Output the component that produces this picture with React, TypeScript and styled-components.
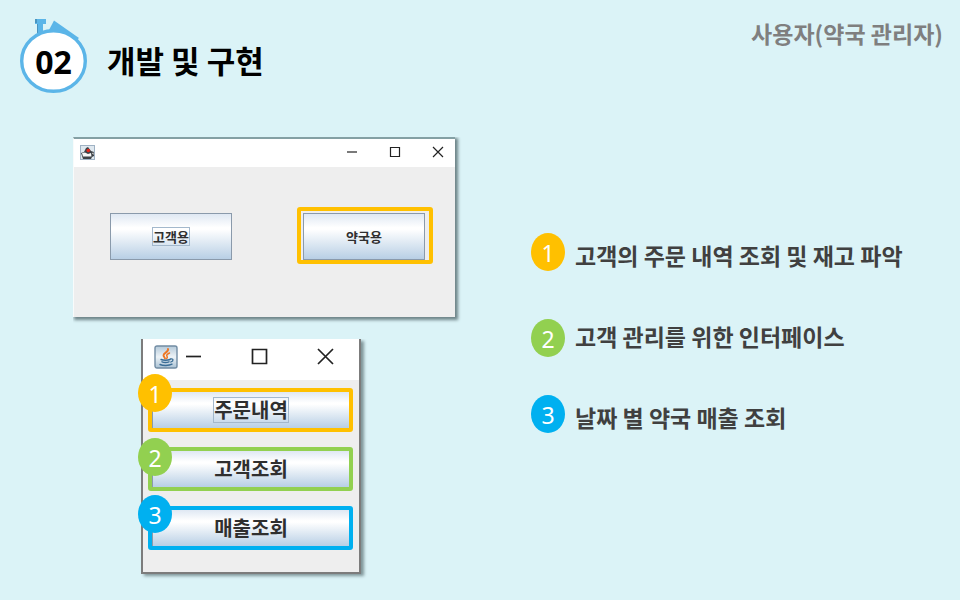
import React from "react";
import styled, { createGlobalStyle } from "styled-components";

const GlobalStyle = createGlobalStyle`
  *, *::before, *::after { box-sizing: border-box; }
  body {
    margin: 0;
    background: #dbf3f7;
    font-family: "Noto Sans CJK KR", "Noto Sans", sans-serif;
  }
`;

const YELLOW = "#ffc000";
const GREEN = "#92d050";
const BLUE = "#00b0f0";

const Page = styled.div`
  min-height: 100vh;
`;

const Header = styled.header`
  display: flex;
  align-items: flex-start;
  padding: 18px 17px 0 20px;
`;

const Emblem = styled.div`
  position: relative;
  width: 67px;
  height: 76px;
  flex: none;
  svg { display: block; }
`;

const EmblemNumber = styled.span`
  position: absolute;
  inset: 12px 0 0 0;
  display: flex;
  align-items: center;
  justify-content: center;
  font: 700 32px/40px "Noto Sans", sans-serif;
  color: #000;
`;

const Title = styled.h1`
  margin: 20px 0 0 20px;
  font-size: 31px;
  line-height: 44px;
  font-weight: 700;
  color: #000;
`;

const Role = styled.p`
  margin: 0 0 0 auto;
  font-size: 23px;
  line-height: 30px;
  font-weight: 700;
  color: #7f7f7f;
`;

const Main = styled.main`
  display: grid;
  grid-template-columns: 458fr 429fr;
  padding: 43px 0 24px 73px;
`;

const Shots = styled.div`
  display: flex;
  flex-direction: column;
  gap: 22px;
`;

const LauncherWindow = styled.section`
  width: 100%;
  max-width: 382px;
  border-top: 2px solid #84a0a4;
  border-left: 1px solid #f8fbfb;
  background: #eeeeee;
  box-shadow: 2px 2px 3px 1px #6f8589;
  clip-path: inset(0 -8px -8px 0);
`;

const MenuWindow = styled.section`
  width: 100%;
  max-width: 220px;
  margin-left: 68px;
  border: 2px solid #7c7c7c;
  border-top: 0;
  background: #eeeeee;
  box-shadow: 3px 2px 3px 0 #7f9599;
  clip-path: inset(0 -8px -8px -8px);
`;

const TitleBar = styled.div<{ $large?: boolean }>`
  display: flex;
  align-items: center;
  height: ${(p) => (p.$large ? 41 : 28)}px;
  padding: ${(p) => (p.$large ? "0 25px 6px 11px" : "0 11px 2px 6px")};
  background: #fff;
  svg { display: block; }
`;

const Controls = styled.div<{ $large?: boolean }>`
  display: flex;
  flex: ${(p) => (p.$large ? 1 : "none")};
  justify-content: space-between;
  gap: ${(p) => (p.$large ? 0 : 31)}px;
  margin-left: ${(p) => (p.$large ? "7px" : "auto")};
`;

const ControlButton = styled.button`
  display: block;
  padding: 0;
  border: 0;
  background: none;
`;

const LauncherBody = styled.div`
  display: flex;
  justify-content: space-between;
  padding: 40px 22px 53px 30px;
`;

const MenuBody = styled.div`
  display: flex;
  flex-direction: column;
  gap: 15px;
  padding: 8px 6px 22px 5px;
`;

const Frame = styled.div<{ $color: string; $menu?: boolean }>`
  position: relative;
  display: flex;
  width: ${(p) => (p.$menu ? "auto" : "136px")};
  height: ${(p) => (p.$menu ? 44 : 57)}px;
  padding: ${(p) => (p.$menu ? 0 : "2px 4px 0 2px")};
  border: 4px solid ${(p) => p.$color};
  border-radius: 3px;
`;

const SwingButton = styled.button<{ $menu?: boolean }>`
  flex: 1;
  display: flex;
  align-items: center;
  justify-content: center;
  padding: 0;
  border: 1px solid #8a9aab;
  border-width: ${(p) => (p.$menu ? "0 0 0 1px" : "1px")};
  background: linear-gradient(#dfe8f3 0%, #ffffff 30%, #ffffff 34%, #b8cfe5 100%);
  font-family: inherit;
  font-weight: 700;
  font-size: ${(p) => (p.$menu ? 20 : 13)}px;
  line-height: ${(p) => (p.$menu ? 24 : 17)}px;
  color: #2f2f2f;
`;

const ButtonLabel = styled.span<{ $focused?: boolean }>`
  border: 1px solid ${(p) => (p.$focused ? "#a3b8cc" : "transparent")};
`;

const Badge = styled.span<{ $color: string }>`
  display: flex;
  flex: none;
  align-items: center;
  justify-content: center;
  width: 34px;
  height: 38px;
  padding-top: 2px;
  border-radius: 50%;
  background: ${(p) => p.$color};
  font: 400 23px/32px "Noto Sans", sans-serif;
  color: #fff;
`;

const PinnedBadge = styled(Badge)<{ $top: number }>`
  position: absolute;
  left: -14px;
  top: ${(p) => p.$top}px;
`;

const Notes = styled.ol`
  display: flex;
  flex-direction: column;
  gap: 33px;
  margin: 96px 0 0;
  padding: 0;
  list-style: none;
`;

const Note = styled.li`
  display: flex;
  height: 48px;
  gap: 10px;
`;

const NoteBadge = styled(Badge)<{ $align: string }>`
  align-self: ${(p) => p.$align};
`;

const NoteText = styled.span`
  font-size: 23px;
  line-height: 44px;
  font-weight: 700;
  color: #404040;
  white-space: nowrap;
`;

function StopwatchArt() {
  return (
    <svg width="67" height="76" viewBox="0 0 67 76" aria-hidden="true">
      <path d="M15 1h11v5h-3v10h-6V6h-2z" fill="#5bb5e8" />
      <path d="M15 1h2v4h-2zM17 6h1v9h-1z" fill="#4a94bf" />
      <path d="M34 2.500L59 20L52 26L29 12z" fill="#5bb5e8" />
      <ellipse cx="33.500" cy="43" rx="31.800" ry="30.300" fill="#fff" stroke="#5bb5e8" strokeWidth="3.400" />
    </svg>
  );
}

function DukeIcon() {
  return (
    <svg width="15" height="15" viewBox="0 0 15 15" aria-hidden="true">
      <rect x=".5" y=".5" width="14" height="14" fill="#dfe8ef" stroke="#9fb2c4" />
      <path d="M1 8l3-1 2-4 2-1 3 4 3 1v4l-2 1-1 2H3l-1-3z" fill="#3d4247" />
      <path d="M2 8l3-.5 3 1.500 3-1 .5 3.500H3z" fill="#f4f6f7" />
      <path d="M12 8l1.500-.5v2.500z" fill="#fff" />
      <circle cx="8.300" cy="5.500" r="1.800" fill="#e8261c" />
    </svg>
  );
}

function JavaIcon() {
  return (
    <svg width="24" height="24" viewBox="0 0 24 24" aria-hidden="true">
      <defs>
        <linearGradient id="javaTile" x1="0" y1="0" x2="0" y2="1">
          <stop offset="0" stopColor="#b4c9d9" />
          <stop offset=".5" stopColor="#edf3f7" />
          <stop offset="1" stopColor="#a9c1d3" />
        </linearGradient>
      </defs>
      <rect x="1" y="1" width="22" height="22" rx="2" fill="url(#javaTile)" stroke="#718ca3" strokeWidth="1.400" />
      <g fill="none" strokeLinecap="round">
        <path d="M14 4c1 3-5 4-4.500 6.500C9.800 12 11 12.500 11 13.500" stroke="#ee7623" strokeWidth="1.900" />
        <path d="M15.500 8c-2 1-3.500 1.800-2.500 3.200.6.900.4 1.600-.3 2.300" stroke="#ee7623" strokeWidth="1.500" />
        <path d="M7 14.500c2 1 7 1 9 0M8 16.800c2 .8 5 .8 7 0M6 19.500c3 1.400 9 1.300 12-.3" stroke="#3b6d96" strokeWidth="1.400" />
        <path d="M16.500 14c3-.8 3.500 2 .3 3" stroke="#3b6d96" strokeWidth="1.300" />
      </g>
    </svg>
  );
}

function WindowControls({ large }: { large?: boolean }) {
  const s = large ? 17 : 12;
  const w = large ? 1.7 : 1.2;
  const a = 1;
  const b = s - 1;
  const shapes = [
    { name: "최소화", d: `M${a} ${s / 2}H${b}` },
    { name: "최대화", d: `M${a + 0.5} ${a + 0.5}H${b - 0.5}V${b - 0.5}H${a + 0.5}z` },
    { name: "닫기", d: `M${a} ${a}L${b} ${b}M${b} ${a}L${a} ${b}` },
  ];
  return (
    <Controls $large={large}>
      {shapes.map((shape) => (
        <ControlButton key={shape.name} type="button" aria-label={shape.name}>
          <svg width={s} height={s} viewBox={`0 0 ${s} ${s}`}>
            <path d={shape.d} fill="none" stroke="#222" strokeWidth={w} />
          </svg>
        </ControlButton>
      ))}
    </Controls>
  );
}

const menuItems = [
  { n: 1, label: "주문내역", color: YELLOW, top: -18, focused: true },
  { n: 2, label: "고객조회", color: GREEN, top: -13, focused: false },
  { n: 3, label: "매출조회", color: BLUE, top: -15, focused: false },
];

const notes = [
  { n: 1, text: "고객의 주문 내역 조회 및 재고 파악", color: YELLOW, align: "flex-start" },
  { n: 2, text: "고객 관리를 위한 인터페이스", color: GREEN, align: "center" },
  { n: 3, text: "날짜 별 약국 매출 조회", color: BLUE, align: "flex-start" },
];

export default function App() {
  return (
    <Page>
      <GlobalStyle />
      <Header>
        <Emblem>
          <StopwatchArt />
          <EmblemNumber>02</EmblemNumber>
        </Emblem>
        <Title>개발 및 구현</Title>
        <Role>사용자(약국 관리자)</Role>
      </Header>
      <Main>
        <Shots>
          <LauncherWindow>
            <TitleBar>
              <DukeIcon />
              <WindowControls />
            </TitleBar>
            <LauncherBody>
              <Frame $color="transparent">
                <SwingButton type="button">
                  <ButtonLabel $focused>고객용</ButtonLabel>
                </SwingButton>
              </Frame>
              <Frame $color={YELLOW}>
                <SwingButton type="button">
                  <ButtonLabel>약국용</ButtonLabel>
                </SwingButton>
              </Frame>
            </LauncherBody>
          </LauncherWindow>
          <MenuWindow>
            <TitleBar $large>
              <JavaIcon />
              <WindowControls large />
            </TitleBar>
            <MenuBody>
              {menuItems.map((item) => (
                <Frame key={item.n} $color={item.color} $menu>
                  <SwingButton type="button" $menu>
                    <ButtonLabel $focused={item.focused}>{item.label}</ButtonLabel>
                  </SwingButton>
                  <PinnedBadge $color={item.color} $top={item.top}>
                    {item.n}
                  </PinnedBadge>
                </Frame>
              ))}
            </MenuBody>
          </MenuWindow>
        </Shots>
        <Notes>
          {notes.map((note) => (
            <Note key={note.n}>
              <NoteBadge $color={note.color} $align={note.align}>
                {note.n}
              </NoteBadge>
              <NoteText>{note.text}</NoteText>
            </Note>
          ))}
        </Notes>
      </Main>
    </Page>
  );
}
